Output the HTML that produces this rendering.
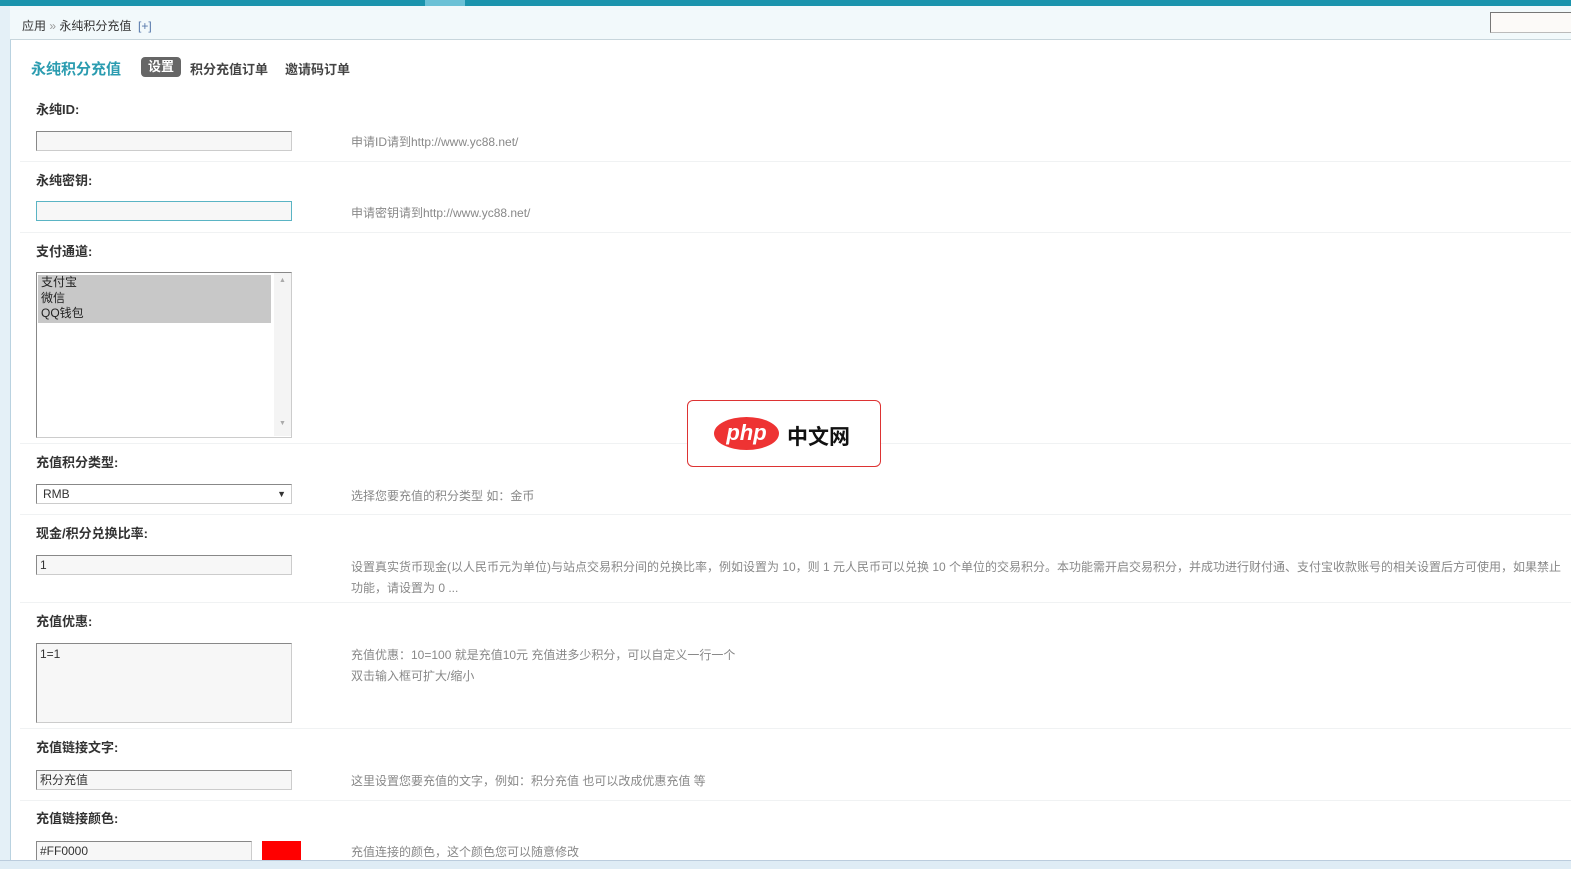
<!DOCTYPE html>
<html><head><meta charset="utf-8"><style>
body{margin:0;width:1571px;height:868px;overflow:hidden;background:#fff;font-family:"Liberation Sans","Noto Sans CJK SC",sans-serif;font-size:12px;color:#333;position:relative}
.a{position:absolute}
.top{left:0;top:0;width:1571px;height:6px;background:#1b94ad}
.hdr{left:10px;top:6px;width:1561px;height:33px;background:#f2f9fb;border-bottom:1px solid #c8d6dc}
.lft{left:0;top:0;width:10px;height:868px;background:#e4f0f7;border-right:1px solid #b9d2e0}
.bot{left:0;top:860px;width:1571px;height:8px;background:#dfecf5;border-top:1px solid #bcd}
.lbl{font-weight:bold;font-size:13px;color:#333;left:36px}
.inp{left:36px;border:1px solid #888;border-bottom-color:#ccc;border-right-color:#ccc;background:#f7f7f7;font-size:12px;line-height:18px;padding-left:3px;box-sizing:border-box;width:256px;height:20px}
.tip{left:351px;color:#888;font-size:12px}
.sep{left:20px;width:1551px;height:1px;background:#f0f2f3}
</style></head><body>
<div class="a lft"></div>
<div class="a top"></div>
<div class="a" style="left:425px;top:0;width:40px;height:6px;background:#6bc1d6"></div>
<div class="a hdr"></div>
<div class="a" style="left:22px;top:17px;font-size:12px;color:#333">应用 <span style="color:#999">»</span> 永纯积分充值 <span style="color:#57a">&nbsp;[+]</span></div>
<div class="a" style="left:1490px;top:12px;width:90px;height:19px;border:1px solid #777;border-bottom-color:#bbb;background:#fcfaf8"></div>
<div class="a" style="left:31px;top:58px;font-size:15px;font-weight:bold;color:#2b9cb0">永纯积分充值</div>
<div class="a" style="left:141px;top:57px;width:40px;height:20px;background:#666;border-radius:4px;color:#fff;font-weight:bold;font-size:13px;text-align:center;line-height:20px">设置</div>
<div class="a" style="left:190px;top:59px;font-weight:bold;font-size:13px;color:#444">积分充值订单</div>
<div class="a" style="left:285px;top:59px;font-weight:bold;font-size:13px;color:#444">邀请码订单</div>

<div class="a lbl" style="top:99px">永纯ID:</div>
<div class="a inp" style="top:131px"></div>
<div class="a tip" style="top:133px">申请ID请到http://www.yc88.net/</div>
<div class="a sep" style="top:161px"></div>

<div class="a lbl" style="top:170px">永纯密钥:</div>
<div class="a inp" style="top:201px;border:1px solid #5ab4c4"></div>
<div class="a tip" style="top:204px">申请密钥请到http://www.yc88.net/</div>
<div class="a sep" style="top:232px"></div>

<div class="a lbl" style="top:241px">支付通道:</div>
<div class="a" style="left:36px;top:272px;width:256px;height:166px;border:1px solid #888;border-bottom-color:#ccc;border-right-color:#ccc;box-sizing:border-box;background:#fff"></div>
<div class="a" style="left:38px;top:275px;width:233px;height:48px;background:#c8c8c8;font-size:12px;line-height:15.5px;padding-left:3px;box-sizing:border-box;color:#222">支付宝<br>微信<br>QQ钱包</div>
<div class="a" style="left:274px;top:273px;width:17px;height:163px;background:#f4f4f4;color:#aaa;font-size:7px;text-align:center"><div style="margin-top:4px">▲</div><div style="margin-top:136px">▼</div></div>
<div class="a sep" style="top:443px"></div>

<div class="a lbl" style="top:452px">充值积分类型:</div>
<div class="a inp" style="top:484px;background:#fff;padding-left:6px">RMB<span style="position:absolute;right:5px;font-size:9px">▼</span></div>
<div class="a tip" style="top:487px">选择您要充值的积分类型 如：金币</div>
<div class="a sep" style="top:514px"></div>

<div class="a lbl" style="top:523px">现金/积分兑换比率:</div>
<div class="a inp" style="top:555px">1</div>
<div class="a tip" style="top:557px;line-height:21px;white-space:nowrap">设置真实货币现金(以人民币元为单位)与站点交易积分间的兑换比率，例如设置为 10，则 1 元人民币可以兑换 10 个单位的交易积分。本功能需开启交易积分，并成功进行财付通、支付宝收款账号的相关设置后方可使用，如果禁止<br>功能，请设置为 0 ...</div>
<div class="a sep" style="top:602px"></div>

<div class="a lbl" style="top:611px">充值优惠:</div>
<div class="a inp" style="top:643px;height:80px;line-height:20px">1=1</div>
<div class="a tip" style="top:645px;line-height:21px">充值优惠：10=100 就是充值10元 充值进多少积分，可以自定义一行一个<br>双击输入框可扩大/缩小</div>
<div class="a sep" style="top:728px"></div>

<div class="a lbl" style="top:737px">充值链接文字:</div>
<div class="a inp" style="top:770px">积分充值</div>
<div class="a tip" style="top:772px">这里设置您要充值的文字，例如：积分充值 也可以改成优惠充值 等</div>
<div class="a sep" style="top:800px"></div>

<div class="a lbl" style="top:808px">充值链接颜色:</div>
<div class="a inp" style="top:841px;width:216px">#FF0000</div>
<div class="a" style="left:262px;top:841px;width:39px;height:19px;background:#f00"></div>
<div class="a tip" style="top:843px">充值连接的颜色，这个颜色您可以随意修改</div>
<div class="a bot"></div>

<div class="a" style="left:687px;top:400px;width:192px;height:65px;border:1px solid #d33;border-radius:6px;background:#fff"></div>
<div class="a" style="left:714px;top:417px;width:65px;height:33px;border-radius:50%;background:#e33;color:#fff;font-style:italic;font-weight:bold;font-size:22px;text-align:center;line-height:31px">php</div>
<div class="a" style="left:787px;top:421px;font-size:21px;color:#111;font-weight:bold;letter-spacing:0px">中文网</div>
</body></html>
